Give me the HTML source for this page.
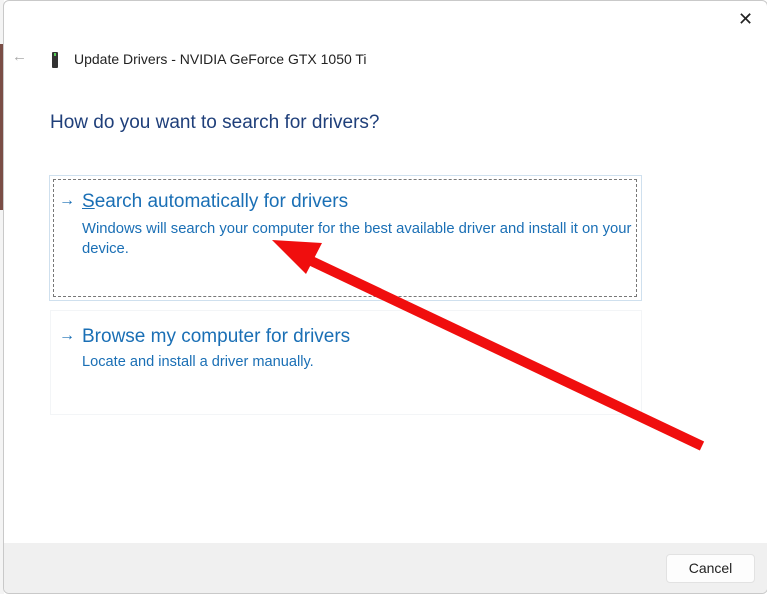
<!DOCTYPE html>
<html><head><style>
body{margin:0;width:767px;height:594px;overflow:hidden;background:#fff;font-family:"Liberation Sans",sans-serif;position:relative}
.bg{position:absolute;left:0;top:0;width:4px;height:594px;background:#f4f4f4}
.bg1{position:absolute;left:0;top:44px;width:3px;height:166px;background:#7a4d45}
.dlg{position:absolute;left:3px;top:0;width:763px;height:592px;background:#fff;border:1px solid #c9c9c9;border-radius:6px;overflow:hidden}
.t{position:absolute;white-space:nowrap}
.foot{position:absolute;left:0;top:542px;width:100%;height:52px;background:#f0f0f0}
.btn{position:absolute;left:662px;top:553px;width:87px;height:27px;background:#fdfdfd;border:1px solid #e2e2e2;border-radius:4px;font-size:14px;color:#222;text-align:center;line-height:27px}
.opt{position:absolute;color:#1a6fb5}
</style></head><body>
<div class="bg"></div><div class="bg1"></div>
<div class="dlg">
<div class="t" style="left:8px;top:47px;font-size:15px;color:#aaa">←</div>
<div style="position:absolute;left:48px;top:51px;width:6px;height:16px;background:#333;border-radius:1px"></div>
<div style="position:absolute;left:50px;top:52px;width:2px;height:3px;background:#5c5"></div>
<div class="t" style="left:70px;top:50px;font-size:14px;color:#222">Update Drivers - NVIDIA GeForce GTX 1050 Ti</div>
<div class="t" style="left:46px;top:111px;font-size:19px;color:#1f3f7a">How do you want to search for drivers?</div>
<div style="position:absolute;left:45px;top:174px;width:591px;height:124px;border:1px solid #cfe0ee"></div>
<div style="position:absolute;left:49px;top:178px;width:582px;height:116px;border:1px dashed #777"></div>
<div class="t opt" style="left:55px;top:191px;font-size:16px">→</div>
<div class="t opt" style="left:78px;top:190px;font-size:19px"><u style="text-decoration-thickness:1px">S</u>earch automatically for drivers</div>
<div class="t opt" style="left:78px;top:218px;font-size:14.8px;line-height:20px">Windows will search your computer for the best available driver and install it on your<br>device.</div>
<div style="position:absolute;left:46px;top:309px;width:590px;height:103px;border:1px solid #f3f5f7"></div>
<div class="t opt" style="left:55px;top:326px;font-size:16px">→</div>
<div class="t opt" style="left:78px;top:325px;font-size:19px">Browse my computer for drivers</div>
<div class="t opt" style="left:78px;top:353px;font-size:14.6px">Locate and install a driver manually.</div>
<div class="t" style="left:734px;top:8px;font-size:18px;color:#222">✕</div>
<div class="foot"></div>
<div class="btn">Cancel</div>
</div>
<svg style="position:absolute;left:0;top:0" width="767" height="594">
<line x1="702" y1="446" x2="305" y2="258" stroke="#f00e0e" stroke-width="10"/>
<polygon points="272,240 322,243 306,274" fill="#f00e0e"/>
</svg>
</body></html>
